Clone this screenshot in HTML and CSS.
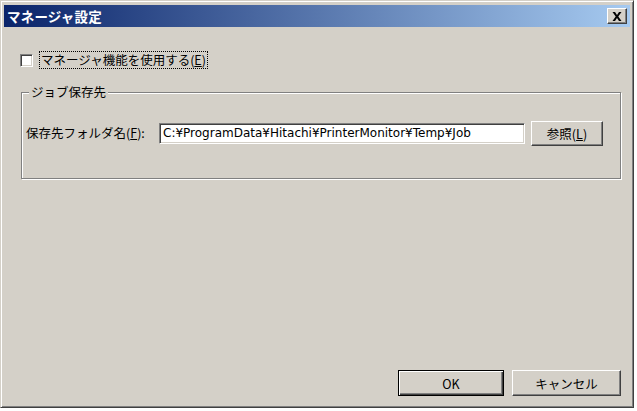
FILE: index.html
```html
<!DOCTYPE html>
<html lang="ja">
<head>
<meta charset="utf-8">
<title>マネージャ設定</title>
<link rel="stylesheet" href="styles.css">
</head>
<body>
<div class="window">
  <div class="titlebar">
    <span class="title">マネージャ設定</span>
    <button class="close" aria-label="閉じる">
      <svg width="10" height="9" viewBox="0 0 10 9"><path d="M0.5 0h2.5l2 3 2-3h2.5L6.3 4.5 9.5 9H7L5 6 3 9H0.5l3.2-4.5z" fill="#000"/></svg>
    </button>
  </div>
  <div class="content">
    <label class="check-row">
      <span class="checkbox"></span>
      <span class="focus">マネージャ機能を使用する(<u>E</u>)</span>
    </label>
    <div class="group">
      <span class="legend">ジョブ保存先</span>
      <div class="field-row">
        <span class="field-label">保存先フォルダ名(<u>F</u>):</span>
        <span class="input">C:¥ProgramData¥Hitachi¥PrinterMonitor¥Temp¥Job</span>
        <button class="btn browse">参照(<u>L</u>)</button>
      </div>
    </div>
    <div class="actions">
      <button class="btn default">OK</button>
      <button class="btn cancel">キャンセル</button>
    </div>
  </div>
</div>
</body>
</html>
```
FILE: styles.css
```css
html, body {
  margin: 0;
  padding: 0;
  background: #ffffff;
}
body {
  font-family: "Noto Sans CJK JP", "Liberation Sans", sans-serif;
  font-size: 12.5px;
  color: #000;
}
.window {
  box-sizing: border-box;
  width: 634px;
  height: 408px;
  background: #d4d0c8;
  border-style: solid;
  border-width: 1px;
  border-color: #d4d0c8 #404040 #404040 #d4d0c8;
  box-shadow: inset 1px 1px 0 #ffffff, inset -1px -1px 0 #808080;
  padding: 4px 3px 3px 3px;
  display: flex;
  flex-direction: column;
}
.titlebar {
  height: 22px;
  background: linear-gradient(to right, #0a246a 0%, #a6caf0 100%);
  display: flex;
  align-items: center;
  padding: 0 3px 0 3px;
}
.title {
  flex: 1;
  color: #fff;
  font-weight: bold;
  font-size: 13.5px;
  line-height: 16px;
  letter-spacing: 0.2px;
}
.close {
  box-sizing: border-box;
  width: 20px;
  height: 16px;
  padding: 0;
  margin: 0;
  background: #d4d0c8;
  border-style: solid;
  border-width: 1px;
  border-color: #ffffff #404040 #404040 #ffffff;
  box-shadow: inset -1px -1px 0 #808080;
  display: flex;
  align-items: center;
  justify-content: center;
}
.content {
  flex: 1;
  display: flex;
  flex-direction: column;
  padding: 24px 9px 8px 16px;
}
.check-row {
  display: flex;
  align-items: center;
  height: 18px;
}
.checkbox {
  box-sizing: border-box;
  width: 13px;
  height: 13px;
  background: #fff;
  border-style: solid;
  border-width: 1px;
  border-color: #808080 #ffffff #ffffff #808080;
  box-shadow: inset 1px 1px 0 #404040, inset -1px -1px 0 #d4d0c8;
}
.focus {
  margin-left: 6px;
  border: 1px dotted #000;
  padding: 0 1px;
  line-height: 16px;
}
.group {
  margin-top: 23px;
  margin-left: 1px;
  border: 1px solid #808080;
  box-shadow: 1px 1px 0 #ffffff, inset 1px 1px 0 #ffffff;
  padding: 0 4px 33px 4px;
  display: flex;
  flex-direction: column;
}
.legend {
  align-self: flex-start;
  margin-top: -9px;
  margin-left: 3px;
  padding: 0 2px;
  background: #d4d0c8;
  line-height: 16px;
}
.field-row {
  margin-top: 21px;
  display: flex;
  align-items: center;
  height: 24px;
}
.field-label {
  width: 133px;
  line-height: 16px;
}
.input {
  box-sizing: border-box;
  width: 366px;
  height: 21px;
  background: #fff;
  border-style: solid;
  border-width: 1px;
  border-color: #808080 #ffffff #ffffff #808080;
  box-shadow: inset 1px 1px 0 #404040, inset -1px -1px 0 #d4d0c8;
  padding: 0 3px;
  font-family: "DejaVu Sans", "Noto Sans CJK JP", sans-serif;
  font-size: 12px;
  line-height: 19px;
  white-space: nowrap;
  overflow: hidden;
}
.btn {
  box-sizing: border-box;
  height: 25px;
  margin: 0;
  padding: 0;
  background: #d4d0c8;
  border-style: solid;
  border-width: 1px;
  border-color: #ffffff #404040 #404040 #ffffff;
  box-shadow: inset -1px -1px 0 #808080;
  font-family: "Noto Sans CJK JP", "Liberation Sans", sans-serif;
  font-size: 12.5px;
  color: #000;
}
.browse {
  width: 72px;
  margin-left: 6px;
}
.actions {
  margin-top: auto;
  display: flex;
  justify-content: flex-end;
  gap: 8px;
}
.actions .btn {
  height: 26px;
}
.default {
  width: 106px;
  border: 1px solid #000;
  box-shadow: inset 1px 1px 0 #ffffff, inset -1px -1px 0 #404040, inset -2px -2px 0 #808080;
}
.cancel {
  width: 109px;
}
```
